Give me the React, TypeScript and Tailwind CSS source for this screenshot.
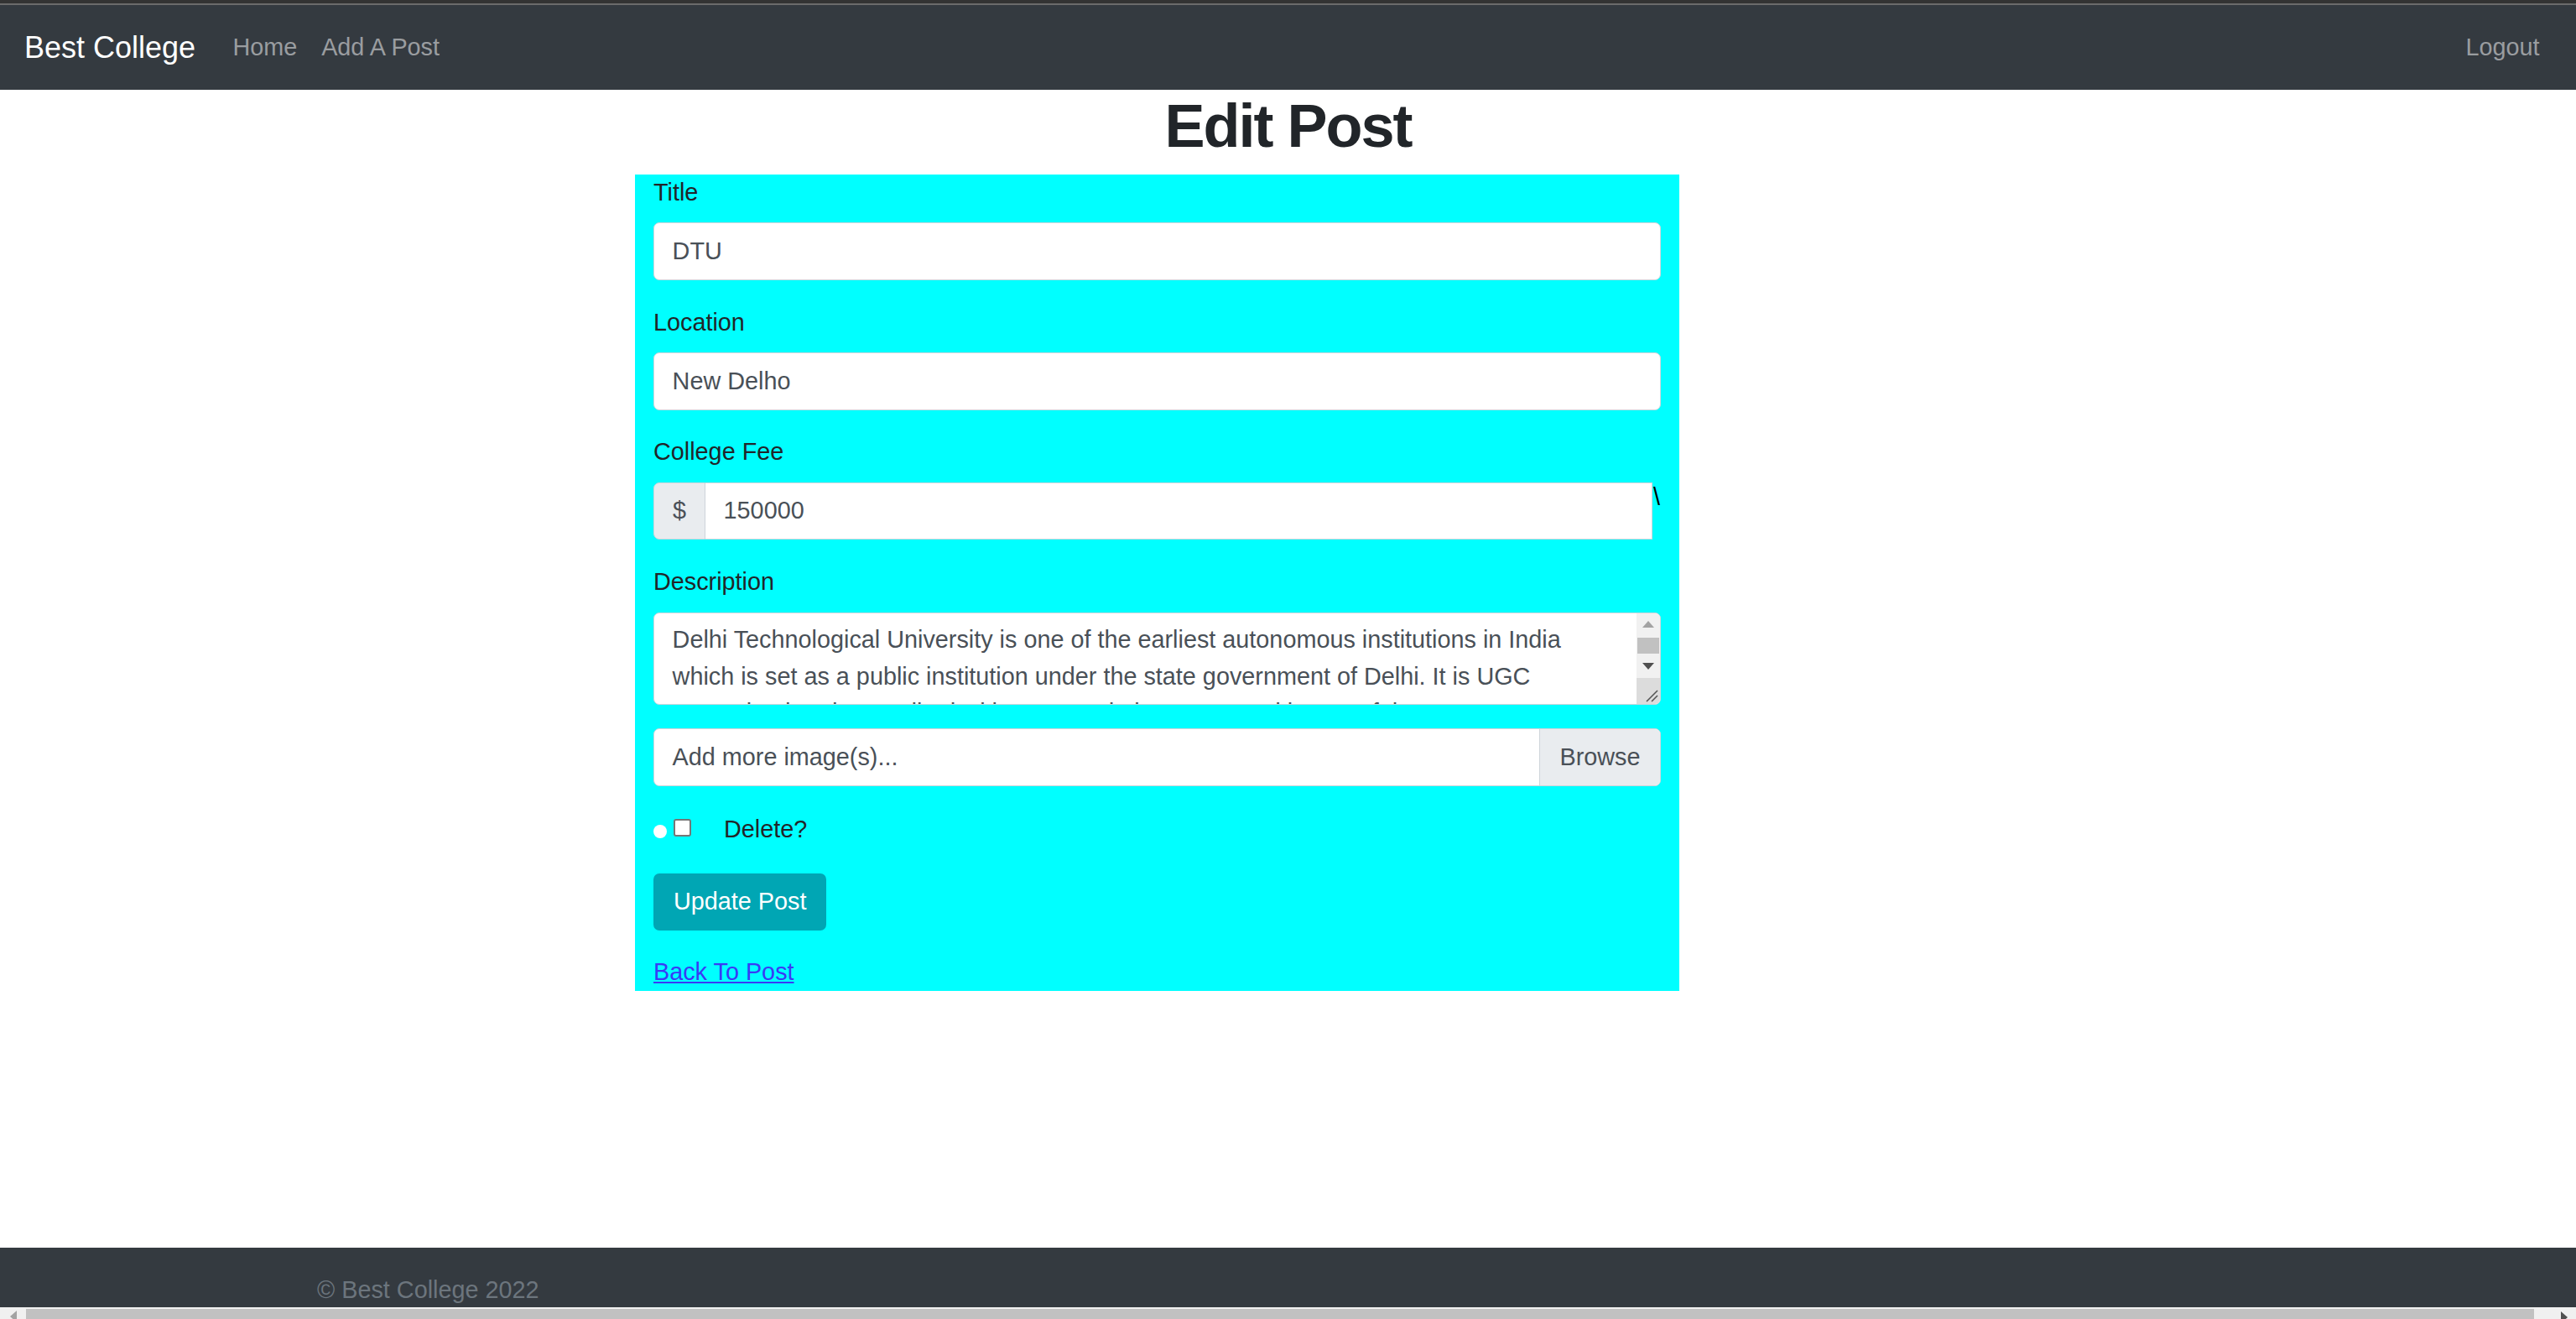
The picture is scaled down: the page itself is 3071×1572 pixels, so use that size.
import React from "react";

const font = "[font-family:'Liberation_Sans',Arial,sans-serif]";

const description =
  "Delhi Technological University is one of the earliest autonomous institutions in India which is set as a public institution under the state government of Delhi. It is UGC recognised and accredited with an A grade by NAAC and is one of the top";

function FieldLabel({ children }: { children: React.ReactNode }) {
  return <label className="block h-[43.2px] leading-[43.2px] mb-[14.4px] text-[#212529]">{children}</label>;
}

function TextField({ value }: { value: string }) {
  return (
    <div className="h-[68.4px] rounded-[7px] border-[1.8px] border-[#ced4da] bg-white px-[21.6px] flex items-center text-[#495057]">
      {value}
    </div>
  );
}

function Triangle({ dir, color }: { dir: "up" | "down" | "left" | "right"; color: string }) {
  const pts = {
    up: "0,8 7,0 14,8",
    down: "0,0 14,0 7,8",
    left: "8,0 8,14 0,7",
    right: "0,0 0,14 8,7",
  }[dir];
  const w = dir === "up" || dir === "down" ? 14 : 8;
  const h = dir === "up" || dir === "down" ? 8 : 14;
  return (
    <svg width={w} height={h} viewBox={`0 0 ${w} ${h}`}>
      <polygon points={pts} fill={color} />
    </svg>
  );
}

export default function App() {
  return (
    <div className={`${font} h-[1572px] w-full overflow-hidden flex flex-col bg-white text-[28.8px]`}>
      {/* browser chrome edge */}
      <div className="h-[4px] bg-[#333333]" />
      <div className="h-[2px] bg-[#6b6b6b]" />

      {/* Navbar */}
      <nav className="h-[101px] bg-[#343a40] flex items-center pl-[29px] pr-[29px]">
        <span className="text-[36px] text-white mr-[30px]">Best College</span>
        <a className="px-[14.4px] text-[#9a9da0]">Home</a>
        <a className="px-[14.4px] text-[#9a9da0]">Add A Post</a>
        <div className="flex-1" />
        <a className="px-[14.4px] text-[#9a9da0]">Logout</a>
      </nav>

      <main className="flex-1">
        <h1 className="h-[86.4px] leading-[86.4px] text-[72px] font-bold tracking-[-2px] text-center text-[#212529] mb-[14.4px]">
          Edit Post
        </h1>

        <form className="ml-[757px] w-[1245px] bg-[#00ffff] px-[22px]">
          <div className="mb-[28.8px]">
            <FieldLabel>Title</FieldLabel>
            <TextField value="DTU" />
          </div>

          <div className="mb-[28.8px]">
            <FieldLabel>Location</FieldLabel>
            <TextField value="New Delho" />
          </div>

          <div className="mb-[28.8px]">
            <FieldLabel>College Fee</FieldLabel>
            <div className="flex h-[68.4px]">
              <div className="w-[62px] rounded-l-[7px] border-[1.8px] border-[#ced4da] bg-[#e9ecef] flex items-center justify-center text-[#495057]">
                $
              </div>
              <div className="flex-1 border-[1.8px] border-l-0 border-[#ced4da] bg-white px-[21.6px] flex items-center text-[#495057]">
                150000
              </div>
              <span className="w-[10px] pl-[1px] leading-[34px] text-black">\</span>
            </div>
          </div>

          <div className="mb-[28.8px]">
            <FieldLabel>Description</FieldLabel>
            <div className="h-[110px] rounded-[7px] border-[1.8px] border-[#ced4da] bg-white flex overflow-hidden">
              <div className="flex-1 overflow-hidden pl-[21.6px] pr-[21.6px] pt-[10.8px] leading-[43.2px] text-[#495057]">
                {description}
              </div>
              <div className="w-[28px] flex flex-col">
                <div className="h-[27px] bg-[#f1f1f1] flex items-center justify-center">
                  <Triangle dir="up" color="#a3a3a3" />
                </div>
                <div className="h-[23px] bg-[#f1f1f1] px-[1px] py-[2px]">
                  <div className="h-full bg-[#c1c1c1]" />
                </div>
                <div className="h-[27px] bg-[#f1f1f1] flex items-center justify-center">
                  <Triangle dir="down" color="#505050" />
                </div>
                <div className="flex-1 bg-[#dcdcdc] flex items-end justify-end">
                  <svg width="16" height="16" viewBox="0 0 16 16" className="mb-[2px] mr-[2px]">
                    <line x1="2" y1="15" x2="15" y2="2" stroke="#555" strokeWidth="1.6" />
                    <line x1="8" y1="15" x2="15" y2="8" stroke="#555" strokeWidth="1.6" />
                  </svg>
                </div>
              </div>
            </div>
          </div>

          <div className="mb-[28.8px] h-[68.4px] rounded-[7px] border-[1.8px] border-[#ced4da] bg-white flex overflow-hidden">
            <div className="flex-1 pl-[21.6px] flex items-center text-[#495057]">Add more image(s)...</div>
            <div className="w-[144px] border-l-[1.8px] border-[#ced4da] bg-[#e9ecef] flex items-center justify-center text-[#495057]">
              Browse
            </div>
          </div>

          <div className="mb-[30px] h-[45px] flex items-center">
            <span className="w-[16px] h-[16px] rounded-full bg-white mt-[6px]" />
            <span className="ml-[8px] w-[21px] h-[21px] rounded-[3px] border-[2px] border-[#767676] bg-white mb-[4px]" />
            <span className="ml-[39px] text-[#212529]">Delete?</span>
          </div>

          <button
            type="button"
            className="h-[68px] rounded-[7px] bg-[#00a6b4] px-[24px] text-white"
          >
            Update Post
          </button>

          <div className="mt-[28.8px] h-[43.2px] leading-[43.2px]">
            <a className="text-[#3a3af5] underline">Back To Post</a>
          </div>
        </form>
      </main>

      {/* Footer */}
      <footer className="h-[71px] bg-[#343a40] pt-[29px] pl-[378px] overflow-hidden">
        <span className="leading-[43.2px] text-[#6c757d]">© Best College 2022</span>
      </footer>

      {/* horizontal scrollbar */}
      <div className="h-[14px] flex bg-[#f0f0f0]">
        <div className="w-[31px] flex items-start justify-center pt-[4px]">
          <Triangle dir="left" color="#a3a3a3" />
        </div>
        <div className="flex-1 pt-[2px]">
          <div className="h-full bg-[#c1c1c1]" />
        </div>
        <div className="w-[50px] flex items-start justify-end pr-[10px] pt-[5px]">
          <Triangle dir="right" color="#505050" />
        </div>
      </div>
    </div>
  );
}
